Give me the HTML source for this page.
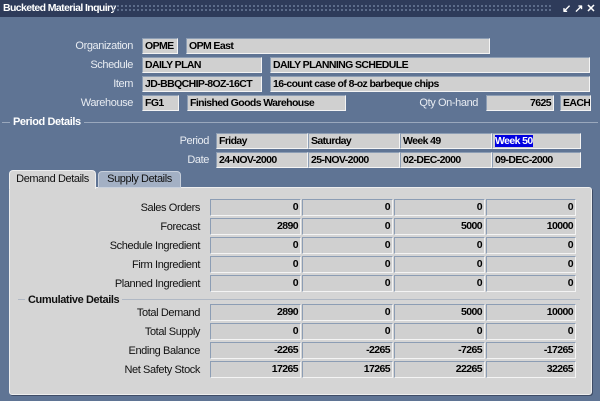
<!DOCTYPE html>
<html><head><style>
*{margin:0;padding:0;box-sizing:border-box}
body{width:600px;height:401px;background:#5f7494;font-family:"Liberation Sans",sans-serif;font-size:11px;letter-spacing:-0.4px;position:relative;overflow:hidden}
.a{position:absolute}
.t{position:absolute;left:0;top:0;width:600px;height:17px;background:#2e3b5a;color:#fff;font-weight:bold;font-size:10.5px;letter-spacing:-0.6px;line-height:17px;padding-left:3px}
.dots{position:absolute;left:112px;top:4px;width:440px;height:9px;background-image:radial-gradient(#6c7c9a 0.8px,transparent 1px);background-size:4px 4px}
.l{position:absolute;color:#e8ecf2;text-align:right;line-height:16px}
.f{position:absolute;height:16px;background:#d0d0d0;border:1px solid;border-color:#8c9db4 #f4f4f4 #f4f4f4 #8c9db4;color:#000;font-weight:bold;font-size:10.5px;letter-spacing:-0.6px;line-height:14px;padding:0 2px;white-space:nowrap;overflow:hidden}
.r{text-align:right}
.pl{position:absolute;color:#111;text-align:right;line-height:17px;width:200px;left:0}
.h{position:absolute;color:#fff;font-weight:bold;line-height:12px}
</style></head><body>
<div class="t">Bucketed Material Inquiry</div>
<div class="dots"></div>
<div class="a" style="left:562px;top:2px;color:#fff;font-size:11px;font-weight:bold;letter-spacing:3px">↙↗✕</div>

<div class="l" style="left:0;width:133px;top:38px">Organization</div>
<div class="f" style="left:142px;top:38px;width:36px">OPME</div>
<div class="f" style="left:186px;top:38px;width:304px">OPM East</div>
<div class="l" style="left:0;width:133px;top:57px">Schedule</div>
<div class="f" style="left:142px;top:57px;width:120px">DAILY PLAN</div>
<div class="f" style="left:270px;top:57px;width:320px">DAILY PLANNING SCHEDULE</div>
<div class="l" style="left:0;width:133px;top:76px">Item</div>
<div class="f" style="left:142px;top:76px;width:120px">JD-BBQCHIP-8OZ-16CT</div>
<div class="f" style="left:270px;top:76px;width:320px">16-count case of 8-oz barbeque chips</div>
<div class="l" style="left:0;width:133px;top:95px">Warehouse</div>
<div class="f" style="left:142px;top:95px;width:37px">FG1</div>
<div class="f" style="left:187px;top:95px;width:159px">Finished Goods Warehouse</div>
<div class="l" style="left:380px;width:98px;top:95px">Qty On-hand</div>
<div class="f r" style="left:486px;top:95px;width:68px">7625</div>
<div class="f" style="left:560px;top:95px;width:31px">EACH</div>

<div class="a" style="left:2px;top:122px;width:596px;height:1px;background:#9aa8bd"></div>
<div class="h" style="left:10px;top:116px;background:#5f7494;padding:0 3px">Period Details</div>

<div class="l" style="left:0;width:209px;top:133px">Period</div>
<div class="f" style="left:216px;top:133px;width:92px">Friday</div>
<div class="f" style="left:308px;top:133px;width:92px">Saturday</div>
<div class="f" style="left:400px;top:133px;width:92px">Week 49</div>
<div class="f" style="left:492px;top:133px;width:89px"><span style="background:#0000e0;color:#fff">Week 50</span></div>
<div class="l" style="left:0;width:209px;top:152px">Date</div>
<div class="f" style="left:216px;top:152px;width:92px">24-NOV-2000</div>
<div class="f" style="left:308px;top:152px;width:92px">25-NOV-2000</div>
<div class="f" style="left:400px;top:152px;width:92px">02-DEC-2000</div>
<div class="f" style="left:492px;top:152px;width:89px">09-DEC-2000</div>

<div class="a" style="left:9px;top:187px;width:583px;height:208px;background:#d5d5d5;border:1px solid #eee;border-radius:3px;box-shadow:1px 1px 0 #3e4c66"></div>
<div class="a" style="left:98px;top:171px;width:83px;height:17px;background:#a3b0c4;border:1px solid #c8d0dc;border-radius:4px 4px 0 0;line-height:15px;text-align:center;color:#111">Supply Details</div>
<div class="a" style="left:9px;top:170px;width:87px;height:19px;background:#d5d5d5;border:1px solid #eee;border-bottom:none;border-radius:4px 4px 0 0;line-height:17px;text-align:center;color:#111">Demand Details</div>

<div class="a" style="left:18px;top:299px;width:562px;height:1px;background:#b0b8c4"></div>
<div class="h" style="left:25px;top:294px;background:#d5d5d5;padding:0 3px;color:#111">Cumulative Details</div>

<div id="g"></div>
<script>
var rows=[[199,"Sales Orders",["0","0","0","0"]],[218,"Forecast",["2890","0","5000","10000"]],[237,"Schedule Ingredient",["0","0","0","0"]],[256,"Firm Ingredient",["0","0","0","0"]],[275,"Planned Ingredient",["0","0","0","0"]],[304,"Total Demand",["2890","0","5000","10000"]],[323,"Total Supply",["0","0","0","0"]],[342,"Ending Balance",["-2265","-2265","-7265","-17265"]],[361,"Net Safety Stock",["17265","17265","22265","32265"]]];
var xs=[210,302,394,486],h="";
rows.forEach(function(r){h+='<div class="pl" style="top:'+(r[0]+1)+'px">'+r[1]+'</div>';
r[2].forEach(function(v,i){h+='<div class="f r" style="left:'+xs[i]+'px;top:'+r[0]+'px;width:'+(i==3?90:91)+'px;height:17px;line-height:15px">'+v+'</div>';});});
document.getElementById("g").innerHTML=h;
</script>
</body></html>
